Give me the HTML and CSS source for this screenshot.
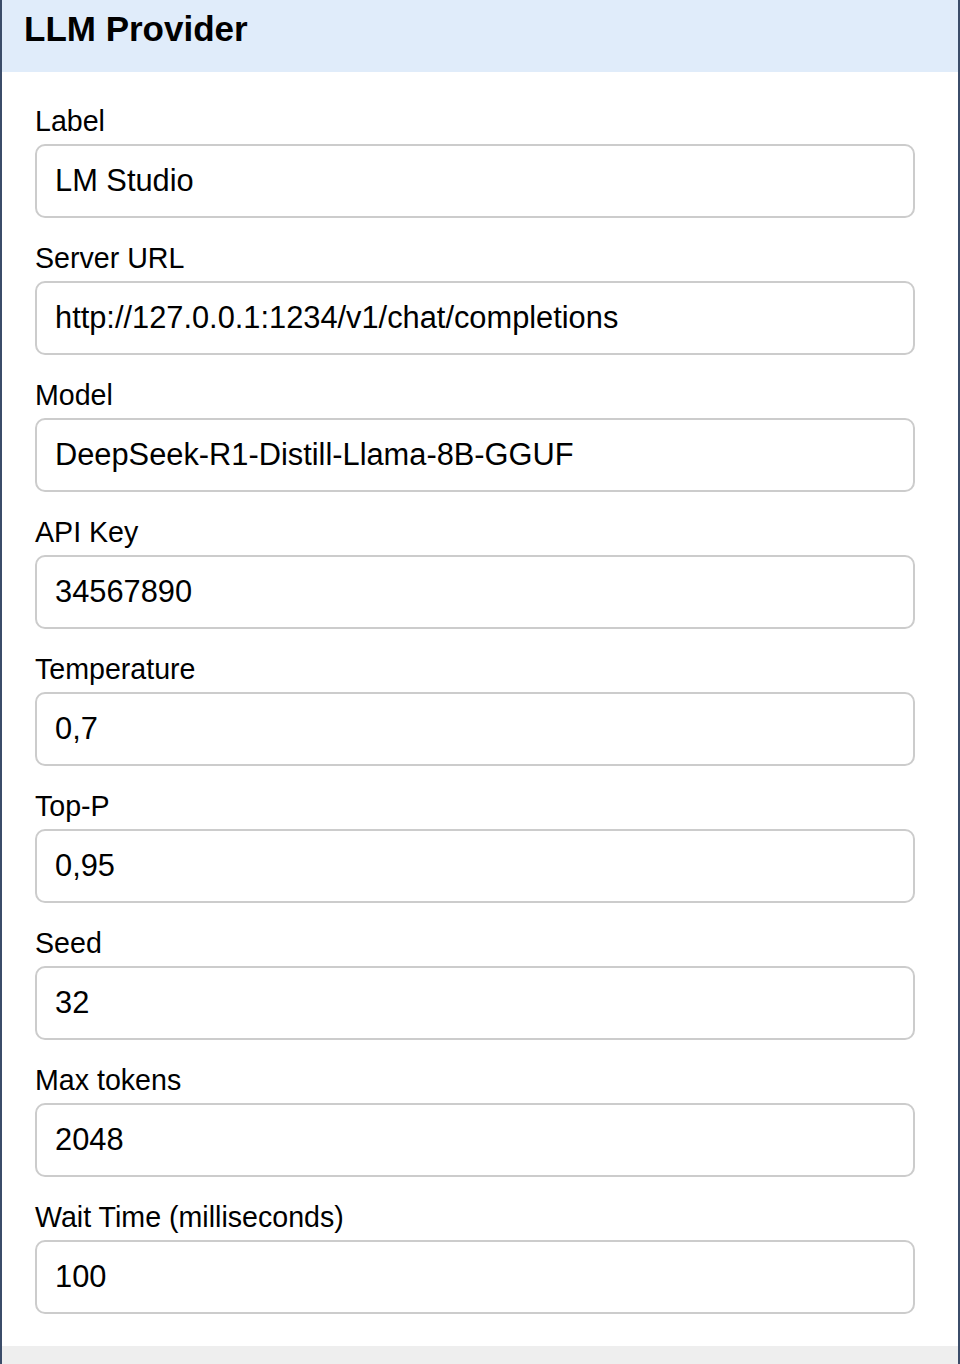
FILE: index.html
```html
<!DOCTYPE html>
<html lang="en">
<head>
    <meta charset="UTF-8">
    <meta name="viewport" content="width=device-width, initial-scale=1.0">
    <title>LLM Provider</title>
    <link rel="stylesheet" href="styles.css">
</head>
<body>
    <div class="panel">
        <div class="panel-header">
            <h2>LLM Provider</h2>
        </div>

        <div class="panel-body">
            <div class="field">
                <label for="label">Label</label>
                <input type="text" id="label" value="LM Studio">
            </div>
            <div class="field">
                <label for="serverUrl">Server URL</label>
                <input type="text" id="serverUrl" value="http://127.0.0.1:1234/v1/chat/completions">
            </div>
            <div class="field">
                <label for="model">Model</label>
                <input type="text" id="model" value="DeepSeek-R1-Distill-Llama-8B-GGUF">
            </div>
            <div class="field">
                <label for="apiKey">API Key</label>
                <input type="text" id="apiKey" value="34567890">
            </div>
            <div class="field">
                <label for="temperature">Temperature</label>
                <input type="text" id="temperature" value="0,7">
            </div>
            <div class="field">
                <label for="topP">Top-P</label>
                <input type="text" id="topP" value="0,95">
            </div>
            <div class="field">
                <label for="seed">Seed</label>
                <input type="text" id="seed" value="32">
            </div>
            <div class="field">
                <label for="maxTokens">Max tokens</label>
                <input type="text" id="maxTokens" value="2048">
            </div>
            <div class="field">
                <label for="waitTime">Wait Time (milliseconds)</label>
                <input type="text" id="waitTime" value="100">
            </div>
        </div>

        <div class="panel-footer"></div>
    </div>
</body>
</html>
```

FILE: styles.css
```css
html, body {
    margin: 0;
    padding: 0;
    height: 100%;
}

body {
    font-family: "Liberation Sans", Arial, sans-serif;
    color: #000;
    background-color: #fff;
}

.panel {
    min-height: 100%;
    border-left: 2px solid #3b4c69;
    border-right: 2px solid #3b4c69;
    display: flex;
    flex-direction: column;
    box-sizing: border-box;
}

.panel-header {
    background-color: #e0ecfa;
    height: 72px;
    padding: 0 22px;
    box-sizing: border-box;
}

.panel-header h2 {
    margin: 0;
    font-size: 35px;
    line-height: 58px;
    font-weight: bold;
}

.panel-body {
    background-color: #fff;
    padding: 33px 43px 32px 33px;
    display: flex;
    flex-direction: column;
    gap: 24px;
}

.field {
    display: flex;
    flex-direction: column;
    gap: 7px;
}

.field label {
    font-size: 28.6px;
    line-height: 32px;
}

.field input[type="text"] {
    font-family: "Liberation Sans", Arial, sans-serif;
    font-size: 30.8px;
    height: 74px;
    box-sizing: border-box;
    padding: 0 18px;
    border: 2px solid #cccccc;
    border-radius: 10px;
    color: #000;
    background-color: #fff;
    outline: none;
}

.panel-footer {
    flex: 1;
    background-color: #eeeeee;
}
```
